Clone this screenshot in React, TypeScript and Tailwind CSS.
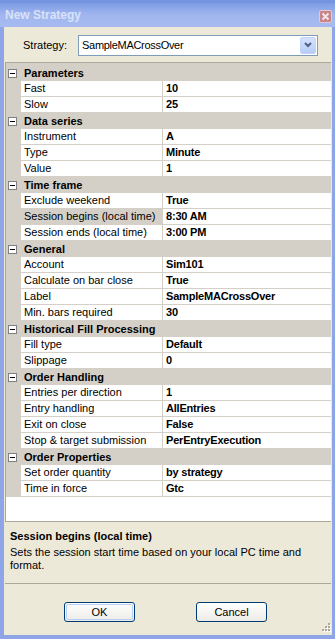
import React from 'react';

type Row = { name: string; value: string; selected?: boolean };
type Category = { title: string; rows: Row[] };

const categories: Category[] = [
  { title: 'Parameters', rows: [{ name: 'Fast', value: '10' }, { name: 'Slow', value: '25' }] },
  {
    title: 'Data series',
    rows: [
      { name: 'Instrument', value: 'A' },
      { name: 'Type', value: 'Minute' },
      { name: 'Value', value: '1' },
    ],
  },
  {
    title: 'Time frame',
    rows: [
      { name: 'Exclude weekend', value: 'True' },
      { name: 'Session begins (local time)', value: '8:30 AM', selected: true },
      { name: 'Session ends (local time)', value: '3:00 PM' },
    ],
  },
  {
    title: 'General',
    rows: [
      { name: 'Account', value: 'Sim101' },
      { name: 'Calculate on bar close', value: 'True' },
      { name: 'Label', value: 'SampleMACrossOver' },
      { name: 'Min. bars required', value: '30' },
    ],
  },
  {
    title: 'Historical Fill Processing',
    rows: [
      { name: 'Fill type', value: 'Default' },
      { name: 'Slippage', value: '0' },
    ],
  },
  {
    title: 'Order Handling',
    rows: [
      { name: 'Entries per direction', value: '1' },
      { name: 'Entry handling', value: 'AllEntries' },
      { name: 'Exit on close', value: 'False' },
      { name: 'Stop & target submission', value: 'PerEntryExecution' },
    ],
  },
  {
    title: 'Order Properties',
    rows: [
      { name: 'Set order quantity', value: 'by strategy' },
      { name: 'Time in force', value: 'Gtc' },
    ],
  },
];

function Collapse() {
  return (
    <div className="w-[9px] h-[9px] border border-[#808080] bg-white flex items-center justify-center">
      <div className="w-[5px] h-px bg-black" />
    </div>
  );
}

function XpButton({ label, focused }: { label: string; focused?: boolean }) {
  return (
    <button className="w-[71px] h-[20px] rounded-[3px] border border-[#003c74] bg-gradient-to-b from-white to-[#ecebe6] text-[11px] text-black flex items-center justify-center p-[1px]">
      <span
        className={
          focused
            ? 'w-full h-full rounded-[2px] border border-[#b8d0f9] flex items-center justify-center'
            : 'w-full h-full flex items-center justify-center'
        }
      >
        {label}
      </span>
    </button>
  );
}

export default function App() {
  return (
    <div
      className="w-[335px] h-[639px] flex flex-col bg-[#8ea6e8] text-black select-none"
      style={{ fontFamily: '"Liberation Sans", Arial, sans-serif' }}
    >
      {/* title bar */}
      <div className="h-[27px] flex items-center justify-between pl-[5px] pr-[3px] bg-gradient-to-b from-[#7d9ce4] via-[#a1b6ef] to-[#a7bbf0] border-t-[3px] border-[#7593de]">
        <span className="text-[12px] font-bold text-[#d8e2f8]">New Strategy</span>
        <div className="w-[13px] h-[13px] rounded-[2px] bg-[#c6868c] border border-[#e6c8cc] flex items-center justify-center mt-[2px]">
          <svg width="9" height="9" viewBox="0 0 9 9">
            <path d="M1.5 1.5 L7.5 7.5 M7.5 1.5 L1.5 7.5" stroke="#f4e6e8" strokeWidth="2" />
          </svg>
        </div>
      </div>

      {/* client */}
      <div className="flex-1 flex flex-col ml-[4px] mr-[3px] mb-[4px] bg-[#ece9d8] relative">
        <div className="h-[35px] flex items-center pl-[19px] pr-[14px] pt-[1px] gap-[11px]">
          <span className="text-[11px]">Strategy:</span>
          <div className="flex-1 h-[21px] border border-[#7f9db9] bg-white flex items-center pl-[3px] pr-px">
            <span className="flex-1 text-[11px] tracking-[-0.3px]">SampleMACrossOver</span>
            <div className="w-[16px] h-[17px] rounded-[2px] bg-gradient-to-b from-[#d6e2fd] to-[#b6ccf8] border border-[#c4d4f8] flex items-center justify-center">
              <svg width="8" height="6" viewBox="0 0 8 6">
                <path d="M1 1 L4 4 L7 1" stroke="#4d6185" strokeWidth="2" fill="none" />
              </svg>
            </div>
          </div>
        </div>

        {/* property grid */}
        <div className="mx-px h-[459px] bg-white border-t border-l border-[#aca899] flex flex-col text-[11px]">
          <div className="h-[2px] bg-[#d4d0c8] shrink-0" />
          {categories.map((c) => (
            <React.Fragment key={c.title}>
              <div className="h-[16px] shrink-0 bg-[#d4d0c8] flex items-center pl-[2px] gap-[7px]">
                <Collapse />
                <span className="font-bold">{c.title}</span>
              </div>
              {c.rows.map((r) => (
                <div key={r.name} className="h-[16px] shrink-0 flex bg-[#d4d0c8]">
                  <div className="w-[15px]" />
                  <div
                    className={
                      r.selected
                        ? 'w-[141px] h-[15px] bg-[#d4d0c8] pl-[3px] flex items-center whitespace-nowrap overflow-hidden'
                        : 'w-[141px] h-[15px] bg-white pl-[3px] flex items-center whitespace-nowrap overflow-hidden'
                    }
                  >
                    {r.name}
                  </div>
                  <div className="w-px" />
                  <div className="flex-1 h-[15px] bg-white pl-[3px] flex items-center font-bold tracking-[-0.2px]">
                    {r.value}
                  </div>
                </div>
              ))}
            </React.Fragment>
          ))}
        </div>

        {/* description */}
        <div className="mx-px h-[63px] border-t border-b border-[#aca899] pl-[5px] pt-[8px] text-[11px] leading-[13px]">
          <div className="font-bold mb-[3px]">Session begins (local time)</div>
          <div>
            Sets the session start time based on your local PC time and
            <br />
            format.
          </div>
        </div>

        <div className="flex-1 flex items-start pt-[18px] pl-[60px] gap-[61px]">
          <XpButton label="OK" focused />
          <XpButton label="Cancel" />
        </div>

        <svg className="absolute right-px bottom-px" width="11" height="11" viewBox="0 0 11 11">
          {[
            [9, 1],
            [9, 4],
            [6, 4],
            [9, 7],
            [6, 7],
            [3, 7],
          ].map(([x, y]) => (
            <React.Fragment key={`${x}-${y}`}>
              <rect x={x} y={y} width="2" height="2" fill="#ffffff" />
              <rect x={x - 1} y={y - 1} width="2" height="2" fill="#aca899" />
            </React.Fragment>
          ))}
        </svg>
      </div>
    </div>
  );
}
